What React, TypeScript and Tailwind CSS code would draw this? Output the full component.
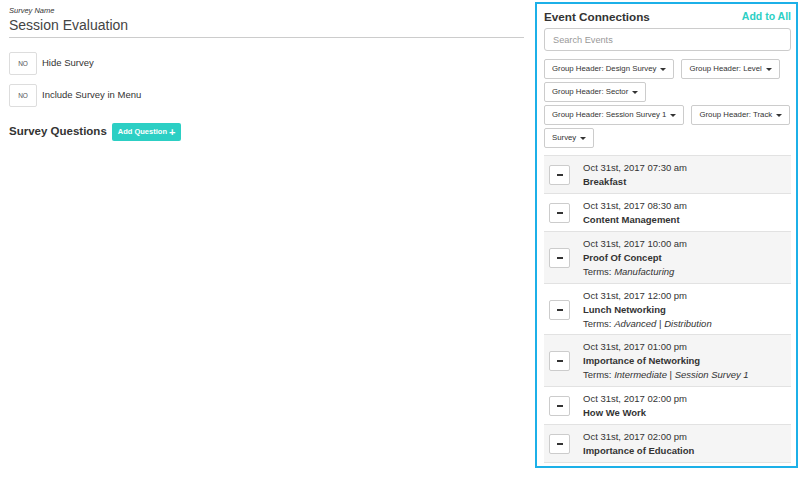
import React from 'react';

const filters: string[][] = [
  ['Group Header: Design Survey', 'Group Header: Level'],
  ['Group Header: Sector'],
  ['Group Header: Session Survey 1', 'Group Header: Track'],
  ['Survey'],
];

type EventRow = { date: string; title: string; terms?: string[] };

const events: EventRow[] = [
  { date: 'Oct 31st, 2017 07:30 am', title: 'Breakfast' },
  { date: 'Oct 31st, 2017 08:30 am', title: 'Content Management' },
  { date: 'Oct 31st, 2017 10:00 am', title: 'Proof Of Concept', terms: ['Manufacturing'] },
  { date: 'Oct 31st, 2017 12:00 pm', title: 'Lunch Networking', terms: ['Advanced', 'Distribution'] },
  { date: 'Oct 31st, 2017 01:00 pm', title: 'Importance of Networking', terms: ['Intermediate', 'Session Survey 1'] },
  { date: 'Oct 31st, 2017 02:00 pm', title: 'How We Work' },
  { date: 'Oct 31st, 2017 02:00 pm', title: 'Importance of Education' },
];

function Caret() {
  return <span className="ml-[4px] inline-block h-0 w-0 border-x-[3px] border-t-[3px] border-x-transparent border-t-[#333] align-middle" />;
}

function Toggle({ label }: { label: string }) {
  return (
    <div className="flex items-center gap-[5px]">
      <div className="flex h-[23px] w-[28px] items-center justify-center rounded-[2px] border border-[#ddd] bg-white text-[6.5px] text-[#555]">
        NO
      </div>
      <span className="text-[9.5px] text-[#333]">{label}</span>
    </div>
  );
}

export default function App() {
  return (
    <div className="flex h-[478px] w-[800px] bg-white font-['Liberation_Sans',Arial,sans-serif] text-[#333]">
      {/* left: survey settings */}
      <div className="w-[524px] shrink-0 pl-[9px] pt-[6px]">
        <div className="text-[7.5px] italic leading-[10px]">Survey Name</div>
        <div className="border-b border-[#ccc] pb-[2px] text-[14px] leading-[19px] text-[#444]">Session Evaluation</div>
        <div className="mt-[14px] flex flex-col gap-[9px]">
          <Toggle label="Hide Survey" />
          <Toggle label="Include Survey in Menu" />
        </div>
        <div className="mt-[16px] flex items-center gap-[5px]">
          <h2 className="text-[11.5px] font-bold">Survey Questions</h2>
          <button className="flex h-[18px] items-center rounded-[2px] bg-[#2ccfc4] px-[6px] text-[7.5px] font-bold text-white">
            Add Question
            <span className="ml-[2px] text-[11px] leading-none">+</span>
          </button>
        </div>
      </div>

      {/* right: event connections */}
      <div className="ml-[11px] mt-[2px] flex h-[466px] w-[263px] shrink-0 flex-col border-2 border-[#1cb0e8] pl-[7px] pr-[5px] pt-[4px]">
        <div className="flex items-center justify-between">
          <h2 className="text-[11.7px] font-semibold leading-[17px]">Event Connections</h2>
          <span className="text-[10.5px] font-semibold text-[#2ccfc4]">Add to All</span>
        </div>
        <input
          className="mt-[3px] h-[23px] w-full rounded-[3px] border border-[#ccc] px-[8px] text-[9.2px] outline-none placeholder:text-[#999]"
          placeholder="Search Events"
        />
        <div className="mt-[8px] flex flex-col gap-[3px]">
          {filters.map((row, i) => (
            <div key={i} className="flex gap-[7px]">
              {row.map((f) => (
                <button
                  key={f}
                  className="flex h-[20px] shrink-0 items-center whitespace-nowrap rounded-[2px] border border-[#ccc] bg-white px-[7px] text-[7.8px] text-[#333]"
                >
                  {f}
                  <Caret />
                </button>
              ))}
            </div>
          ))}
        </div>
        <div className="mt-[7px] border-t border-[#e2e2e2]">
          {events.map((e, i) => (
            <div
              key={i}
              className={`flex items-center border-b border-[#e2e2e2] pt-[5px] ${e.terms ? 'pb-[3.5px]' : 'pb-[4px]'} ${i % 2 === 0 ? 'bg-[#f5f5f5]' : 'bg-white'}`}
            >
              <div className="ml-[5px] flex h-[20px] w-[21px] items-center justify-center rounded-[2px] border border-[#ccc] bg-white">
                <span className="h-[2px] w-[6px] bg-[#333]" />
              </div>
              <div className="ml-[13px] text-[9.5px] leading-[14px]">
                <div>{e.date}</div>
                <div className="font-bold">{e.title}</div>
                {e.terms && (
                  <div>
                    Terms:{' '}
                    {e.terms.map((t, j) => (
                      <span key={t}>
                        {j > 0 && ' | '}
                        <i>{t}</i>
                      </span>
                    ))}
                  </div>
                )}
              </div>
            </div>
          ))}
        </div>
      </div>
    </div>
  );
}
